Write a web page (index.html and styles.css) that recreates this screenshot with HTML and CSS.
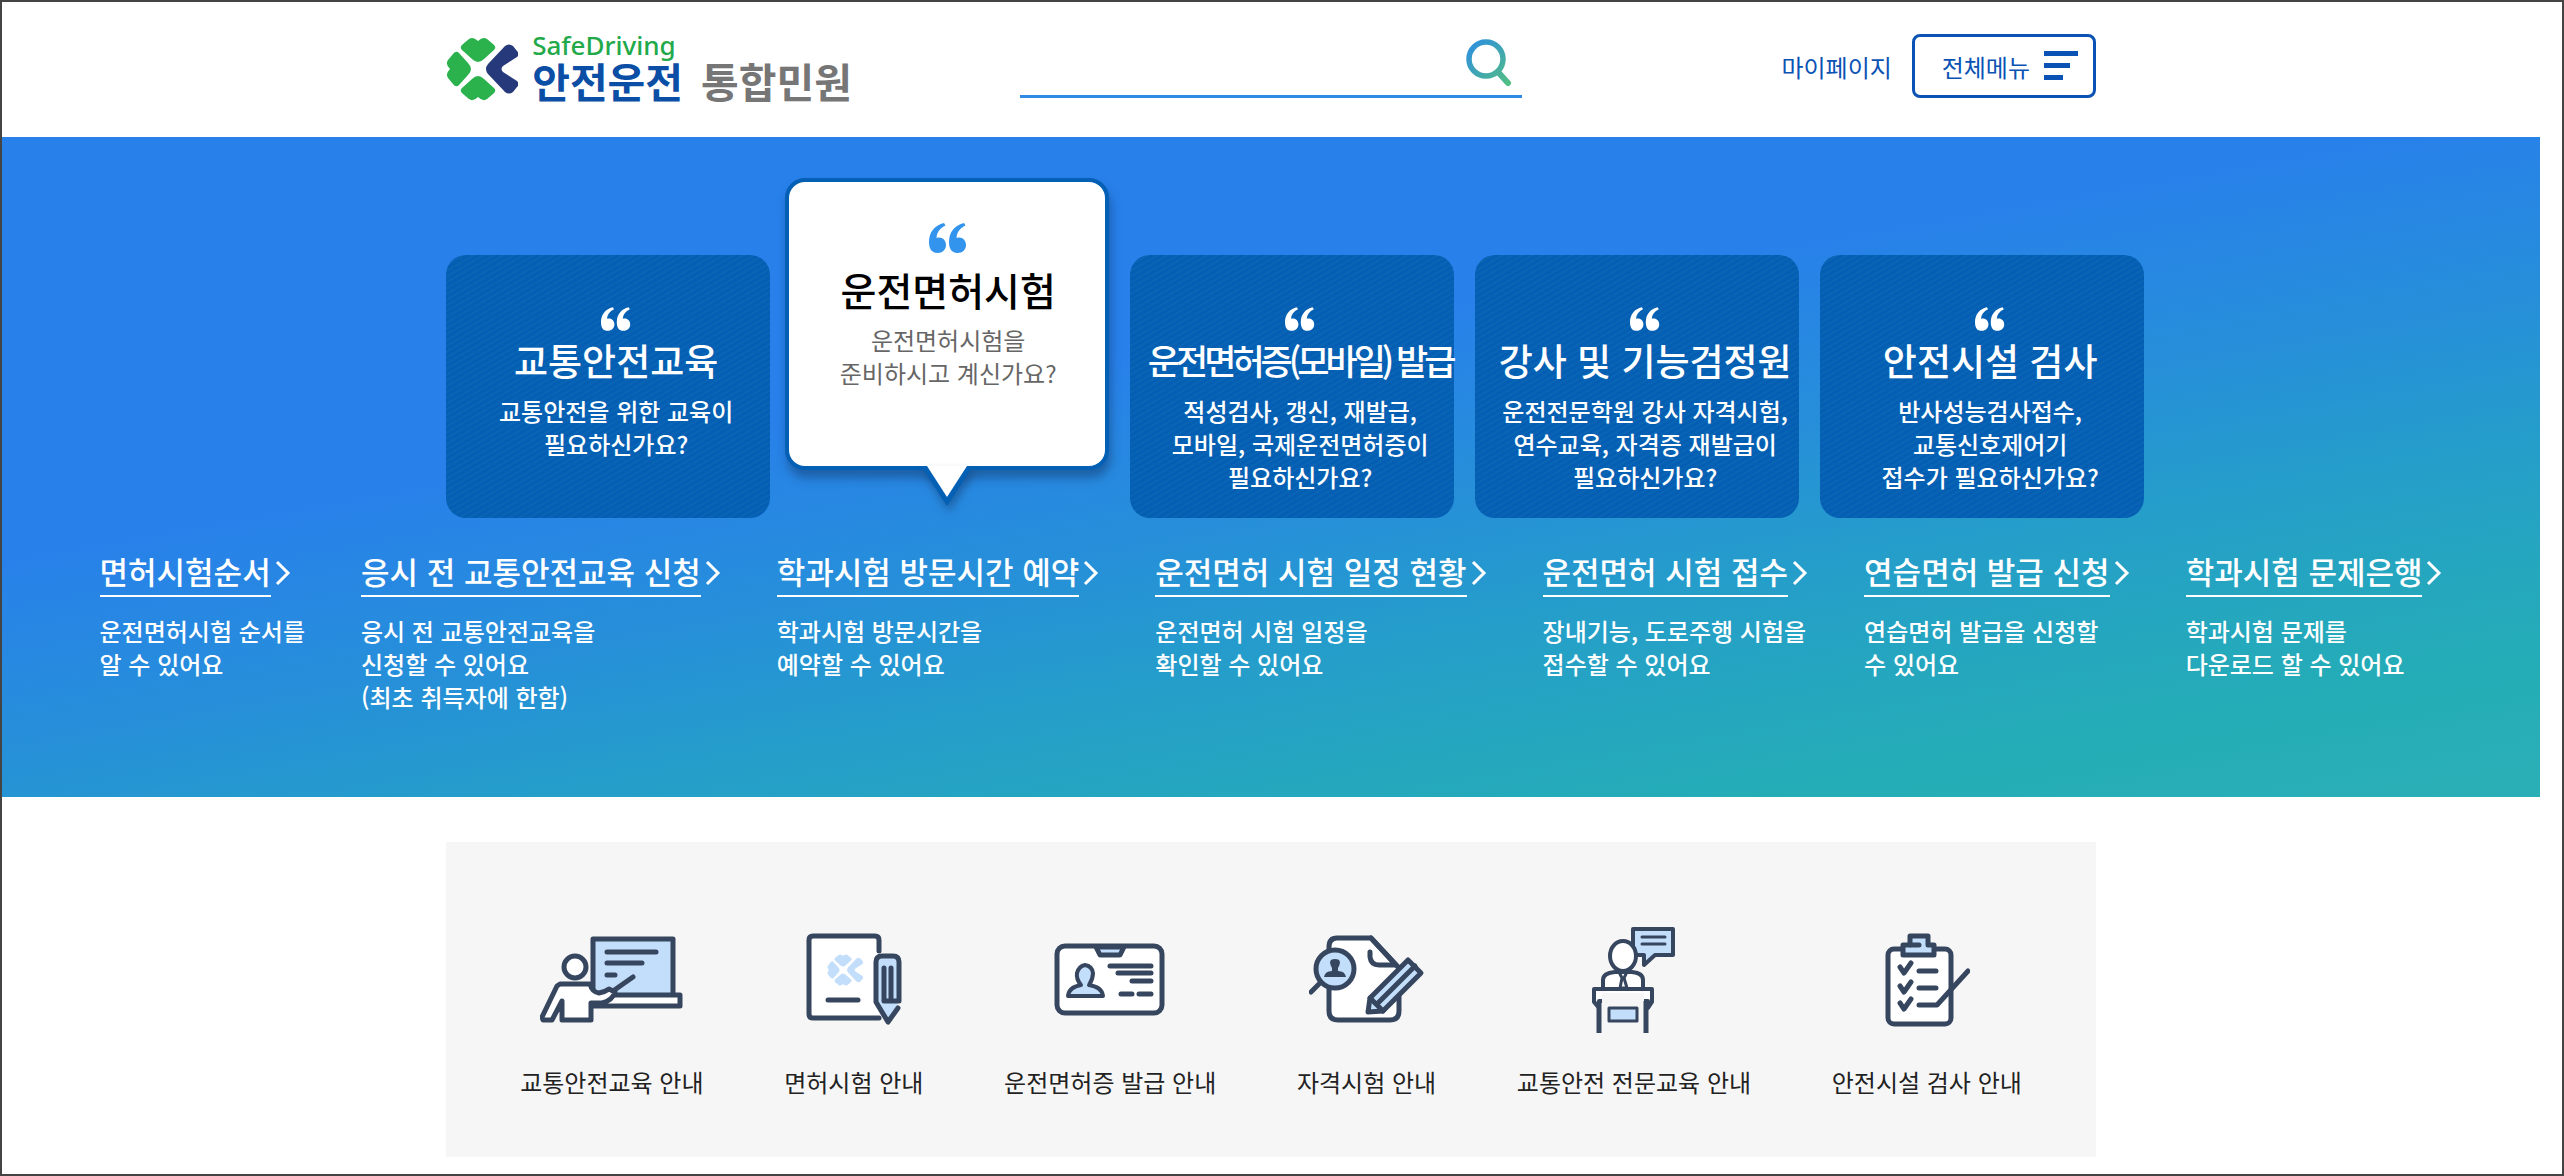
FILE: index.html
```html
<!DOCTYPE html>
<html lang="ko">
<head>
<meta charset="utf-8">
<title>안전운전 통합민원</title>
<link rel="stylesheet" href="styles.css">
</head>
<body>
<svg class="defs" aria-hidden="true">
  <defs>
    <symbol id="quote" viewBox="0 0 38 30">
      <path d="M15 0C6 2 0 9 0 19C0 26 3 30 8.500 30C13.500 30 17 26.500 17 22C17 17.500 14 14.500 10 14.500C8.500 14.500 8 14.700 7.500 15C8 9 11 5 16.500 2.500ZM35 0C26 2 20 9 20 19C20 26 23 30 28.500 30C33.500 30 37 26.500 37 22C37 17.500 34 14.500 30 14.500C28.500 14.500 28 14.700 27.500 15C28 9 31 5 36.500 2.500Z" fill="currentColor"/>
    </symbol>
    <symbol id="chevron" viewBox="0 0 16 26">
      <path d="M2 2L13 13L2 24" fill="none" stroke="currentColor" stroke-width="3"/>
    </symbol>
    <symbol id="clover" viewBox="0 0 72 64">
      <g class="clover-leaf">
        <path d="M17 7L23 2Q27 -1 32 4Q37 -1 41 2L47 7Q51 10 48 13L38 22Q32 28 26 22L16 13Q13 10 17 7Z"/>
        <path d="M17 57L23 62Q27 65 32 60Q37 65 41 62L47 57Q51 54 48 51L38 42Q32 36 26 42L16 51Q13 54 17 57Z"/>
        <path d="M7 17L2 23Q-1 27 4 32Q-1 37 2 41L7 47Q10 51 13 48L22 38Q28 32 22 26L13 16Q10 13 7 17Z"/>
      </g>
      <path class="clover-wing" d="M59 9Q63 6 67 9L71 14Q74 17 71 20L57 29Q54 32 57 35L71 44Q74 47 71 50L67 55Q63 58 59 55L42 37Q38 32 42 27Z"/>
    </symbol>
  </defs>
</svg>

<header class="header">
  <div class="container header-inner">
    <a class="logo" href="#">
      <svg class="logo-mark" viewBox="0 0 72 64" aria-hidden="true"><use href="#clover"/></svg>
      <span class="logo-text">
        <span class="logo-en">SafeDriving</span>
        <span class="logo-ko"><b>안전운전</b><b class="logo-sub">통합민원</b></span>
      </span>
    </a>
    <form class="search">
      <input class="search-input" type="search" aria-label="검색">
      <button class="search-button" type="button" aria-label="검색">
        <svg width="46" height="48" viewBox="0 0 46 48" fill="none" aria-hidden="true">
          <defs><linearGradient id="lens" x1="0" y1="0" x2="46" y2="48" gradientUnits="userSpaceOnUse"><stop offset="0" stop-color="#2b8be6"/><stop offset="1" stop-color="#55c27c"/></linearGradient></defs>
          <circle cx="20" cy="20" r="17" stroke="url(#lens)" stroke-width="5.500"/>
          <path d="M32 33L42 44" stroke="url(#lens)" stroke-width="6" stroke-linecap="round"/>
        </svg>
      </button>
    </form>
    <nav class="tools">
      <a class="mypage" href="#">마이페이지</a>
      <button class="menu-button" type="button">전체메뉴
        <svg width="34" height="30" viewBox="0 0 34 30" aria-hidden="true"><path d="M0 0H34V5H0ZM0 12H26V17H0ZM0 24H19V29H0Z" fill="#0b52b5"/></svg>
      </button>
    </nav>
  </div>
</header>

<main>
<section class="hero">
  <div class="container cards">
    <a class="card" href="#"><svg class="quote" aria-hidden="true"><use href="#quote"/></svg><h2>교통안전교육</h2><p>교통안전을 위한 교육이<br>필요하신가요?</p></a>
    <a class="card active" href="#"><svg class="quote" aria-hidden="true"><use href="#quote"/></svg><h2>운전면허시험</h2><p>운전면허시험을<br>준비하시고 계신가요?</p>
      <svg class="tail" viewBox="0 0 52 40" aria-hidden="true"><path d="M0 0H52L26 40Z" fill="#0460b4"/><path d="M6 0H46L26 31Z" fill="#fff"/></svg></a>
    <a class="card" href="#"><svg class="quote" aria-hidden="true"><use href="#quote"/></svg><h2 class="tight">운전면허증(모바일) 발급</h2><p>적성검사, 갱신, 재발급,<br>모바일, 국제운전면허증이<br>필요하신가요?</p></a>
    <a class="card" href="#"><svg class="quote" aria-hidden="true"><use href="#quote"/></svg><h2>강사 및 기능검정원</h2><p>운전전문학원 강사 자격시험,<br>연수교육, 자격증 재발급이<br>필요하신가요?</p></a>
    <a class="card" href="#"><svg class="quote" aria-hidden="true"><use href="#quote"/></svg><h2>안전시설 검사</h2><p>반사성능검사접수,<br>교통신호제어기<br>접수가 필요하신가요?</p></a>
  </div>
  <ul class="links">
    <li><a href="#"><span>면허시험순서</span><svg aria-hidden="true"><use href="#chevron"/></svg></a><p>운전면허시험 순서를<br>알 수 있어요</p></li>
    <li><a href="#"><span>응시 전 교통안전교육 신청</span><svg aria-hidden="true"><use href="#chevron"/></svg></a><p>응시 전 교통안전교육을<br>신청할 수 있어요<br>(최초 취득자에 한함)</p></li>
    <li><a href="#"><span>학과시험 방문시간 예약</span><svg aria-hidden="true"><use href="#chevron"/></svg></a><p>학과시험 방문시간을<br>예약할 수 있어요</p></li>
    <li><a href="#"><span>운전면허 시험 일정 현황</span><svg aria-hidden="true"><use href="#chevron"/></svg></a><p>운전면허 시험 일정을<br>확인할 수 있어요</p></li>
    <li><a href="#"><span>운전면허 시험 접수</span><svg aria-hidden="true"><use href="#chevron"/></svg></a><p>장내기능, 도로주행 시험을<br>접수할 수 있어요</p></li>
    <li><a href="#"><span>연습면허 발급 신청</span><svg aria-hidden="true"><use href="#chevron"/></svg></a><p>연습면허 발급을 신청할<br>수 있어요</p></li>
    <li><a href="#"><span>학과시험 문제은행</span><svg aria-hidden="true"><use href="#chevron"/></svg></a><p>학과시험 문제를<br>다운로드 할 수 있어요</p></li>
  </ul>
</section>

<nav class="container guides">
  <a class="guide" href="#">
    <svg width="144" height="110" viewBox="0 0 144 110" aria-hidden="true">
      <path d="M53 14H133V71H53Z" class="tint"/>
      <path d="M52 70H140V81H52Z" class="paper"/>
      <path d="M67 27H116M67 38H102M67 50H75"/>
      <circle cx="35" cy="42" r="11" class="paper"/>
      <path d="M20 59H50Q52 67 59 68Q65 67 69 64L75 67Q72 76 62 78H51V95H22V76L12 95H3L2 92L17 61Z" class="paper"/>
      <path d="M73 66L93 52"/>
    </svg>
    <span>교통안전교육 안내</span>
  </a>
  <a class="guide" href="#">
    <svg width="96" height="110" viewBox="0 0 96 110" aria-hidden="true">
      <path d="M73 93H7Q3 93 3 89V15Q3 11 7 11H69Q73 11 73 15V26" fill="#fff"/>
      <path d="M22 75H52"/>
      <svg class="pale" x="21" y="29" width="36" height="32" viewBox="0 0 72 64"><use href="#clover"/></svg>
      <path d="M70 78V37Q70 31 76 31H86Q93 31 93 37V78H92L82 97Z" fill="#c3defb" stroke="none"/>
      <path d="M92 83L82 97L70 77V37Q70 31 76 31H87Q93 31 93 37V76H78V43M85 43V75"/>
    </svg>
    <span>면허시험 안내</span>
  </a>
  <a class="guide" href="#">
    <svg width="112" height="110" viewBox="0 0 112 110" aria-hidden="true">
      <rect x="3" y="21" width="105" height="67" rx="8" class="paper"/>
      <path d="M42 22L46 30H66L70 22Z" class="tint"/>
      <path d="M14 71Q15 62 27 60Q22 54 23 48Q25 41 31 40Q38 41 39 48Q39 54 35 60Q48 62 49 71Z" class="tint narrow"/>
      <path d="M56 41H97M64 48H97M78 56H97M67 69H78M85 69H97"/>
    </svg>
    <span>운전면허증 발급 안내</span>
  </a>
  <a class="guide" href="#">
    <svg width="116" height="110" viewBox="0 0 116 110" aria-hidden="true">
      <path d="M20 36V22Q20 13 28 13H62L90 43V86Q90 95 81 95H29Q20 95 20 86Z" class="paper"/>
      <path d="M61 27V32Q62 40 70 40H87L62 13"/>
      <circle cx="26" cy="44" r="19" class="tint"/>
      <path d="M11 58L2 67"/>
      <path d="M15 52Q16 46 23 46V43Q18 34 26 34Q34 34 29 43V46Q36 46 37 52Z" class="solid"/>
      <path d="M99 35L112 48L74 86L59 87L61 73Z" class="tint"/>
      <path d="M106 41L68 79M61 73L74 86"/>
    </svg>
    <span>자격시험 안내</span>
  </a>
  <a class="guide" href="#">
    <svg width="86" height="110" viewBox="0 0 86 110" aria-hidden="true">
      <path d="M42 4H82V30H64L53 40V30H42Z" class="tint narrow"/>
      <path d="M51 12H74M51 19H74" class="thin"/>
      <ellipse cx="32" cy="31" rx="13" ry="15" class="paper narrow"/>
      <path d="M12 64V55Q12 48 24 47H41Q52 48 52 55V64Z" class="paper narrow"/>
      <path d="M28 47L31 53L29 63H36L33 53L36 47" class="thin"/>
      <path d="M3 64H61V77L57 83V76H8V83L3 77Z" class="paper narrow"/>
      <path d="M11 68H53V80H11Z" fill="#f6f6f6" stroke="none"/>
      <path d="M8 76V108M55 76V108" stroke-linecap="butt"/>
      <path d="M18 83H46V96H18Z" class="tint thin"/>
    </svg>
    <span>교통안전 전문교육 안내</span>
  </a>
  <a class="guide" href="#">
    <svg width="86" height="110" viewBox="0 0 86 110" aria-hidden="true">
      <rect x="4" y="24" width="63" height="75" rx="6" class="paper"/>
      <path d="M19 20H26V11H44V20H50V30H19Z" class="tint"/>
      <path d="M27 20H35"/>
      <path d="M16 42L20 48L27 38M16 61L20 67L27 57M16 78L20 84L27 74M35 46H52M35 63H52M35 80H53L84 46"/>
    </svg>
    <span>안전시설 검사 안내</span>
  </a>
</nav>
</main>
</body>
</html>
```
FILE: styles.css
```css
* { box-sizing: border-box; }

body {
  margin: 0;
  min-height: 100vh;
  padding-right: 22px;
  border: 2px solid #444;
  background: #fff;
  color: #222;
  font: 24px/33px "Noto Sans CJK KR", sans-serif;
}

h2, p, ul { margin: 0; padding: 0; }
a { color: inherit; text-decoration: none; }
button { font: inherit; cursor: pointer; }
.defs { position: absolute; width: 0; height: 0; }

.container { width: 65%; margin: 0 auto; }

/* Header */
.header-inner {
  display: flex;
  align-items: flex-start;
  height: 135px;
  padding-top: 32px;
}
.logo { display: flex; gap: 14px; white-space: nowrap; }
.logo-mark { width: 72px; height: 64px; margin-top: 3px; }
.clover-leaf { fill: var(--clover, #2cb24c); }
.clover-wing { fill: var(--clover, #26397a); }
.logo-text { display: flex; flex-direction: column; }
.logo-en { color: #22a94a; font: 500 26px/22px "Noto Sans", sans-serif; }
.logo-ko { display: flex; gap: 18px; color: #0b4ea5; font-size: 41px; line-height: 48px; }
.logo-sub { color: #767676; }

.search {
  display: flex;
  align-items: flex-start;
  width: 502px;
  height: 64px;
  margin-left: auto;
  border-bottom: 3px solid #2f8ae3;
}
.search-input { flex: 1; min-width: 0; height: 60px; border: 0; outline: 0; background: none; font: inherit; appearance: none; }
.search-button { padding: 5px 10px 0 0; border: 0; background: none; line-height: 0; }

.tools { display: flex; align-items: center; gap: 20px; margin-left: 258px; color: #0b52b5; white-space: nowrap; }
.mypage { width: 112px; text-align: right; }
.menu-button {
  display: flex;
  align-items: center;
  justify-content: center;
  gap: 14px;
  width: 184px;
  height: 64px;
  padding: 0 0 0 12px;
  border: 3px solid #0b52b5;
  border-radius: 8px;
  background: #fff;
  color: inherit;
}

/* Hero */
.hero {
  height: 660px;
  padding-top: 41px;
  background: linear-gradient(170deg, #2880eb 0%, #2880eb 37%, #2690d8 56%, #259dcb 67%, #25a6bf 78%, #24adb6 88%, #2bafb7 100%);
  color: #fff;
}
.cards { display: flex; align-items: flex-end; gap: 21px; height: 340px; }
.card {
  position: relative;
  flex: none;
  width: 324px;
  height: 263px;
  padding: 52px 0 0 16px;
  border-radius: 20px;
  background: repeating-linear-gradient(150deg, #045eb3 0 3px, #0965b4 3px 5px);
  font-weight: 500;
  text-align: center;
  white-space: nowrap;
}
.quote { display: block; width: 30px; height: 24px; margin: 0 auto 7px; }
.card h2 { margin-bottom: 12px; font-size: 37px; font-weight: 500; line-height: 44px; }
.card .tight { font-size: 35px; letter-spacing: -4px; }
.card.active {
  height: 292px;
  margin: 0 0 48px -6px;
  padding: 41px 0 0 2px;
  border: 4px solid #0460b4;
  background: #fff;
  box-shadow: 2px 8px 10px rgba(20, 60, 110, .5);
  color: #666;
  font-weight: 400;
}
.active .quote { width: 38px; height: 30px; margin-bottom: 14px; color: #3394ee; }
.active h2 { color: #000; font-size: 39px; }
.tail {
  position: absolute;
  top: 100%;
  left: 50%;
  width: 52px;
  height: 40px;
  margin-left: -26px;
  filter: drop-shadow(2px 6px 4px rgba(20, 60, 110, .5));
}

.links {
  display: flex;
  justify-content: center;
  gap: 56px;
  padding-top: 30px;
  list-style: none;
  font-weight: 500;
  white-space: nowrap;
}
.links a { display: flex; align-items: center; gap: 4px; margin-bottom: 17px; font-size: 31px; line-height: 45px; }
.links span { padding-bottom: 2px; border-bottom: 2px solid #fff; }
.links svg { width: 16px; height: 26px; }

/* Guide shortcuts */
.guides {
  display: flex;
  justify-content: space-between;
  margin-top: 45px;
  height: 315px;
  padding: 83px 74px 0;
  background: #f6f6f6;
}
.guide { display: flex; flex-direction: column; align-items: center; gap: 30px; white-space: nowrap; }
.guide svg { fill: none; stroke: #37465f; stroke-width: 5; stroke-linecap: round; stroke-linejoin: round; }
.guide .paper { fill: #fff; }
.guide .tint { fill: #c3defb; }
.guide .solid { fill: #37465f; stroke: none; }
.guide .narrow { stroke-width: 4; }
.guide .thin { stroke-width: 3; }
.guide .pale { --clover: #c3defb; stroke: none; }
```
